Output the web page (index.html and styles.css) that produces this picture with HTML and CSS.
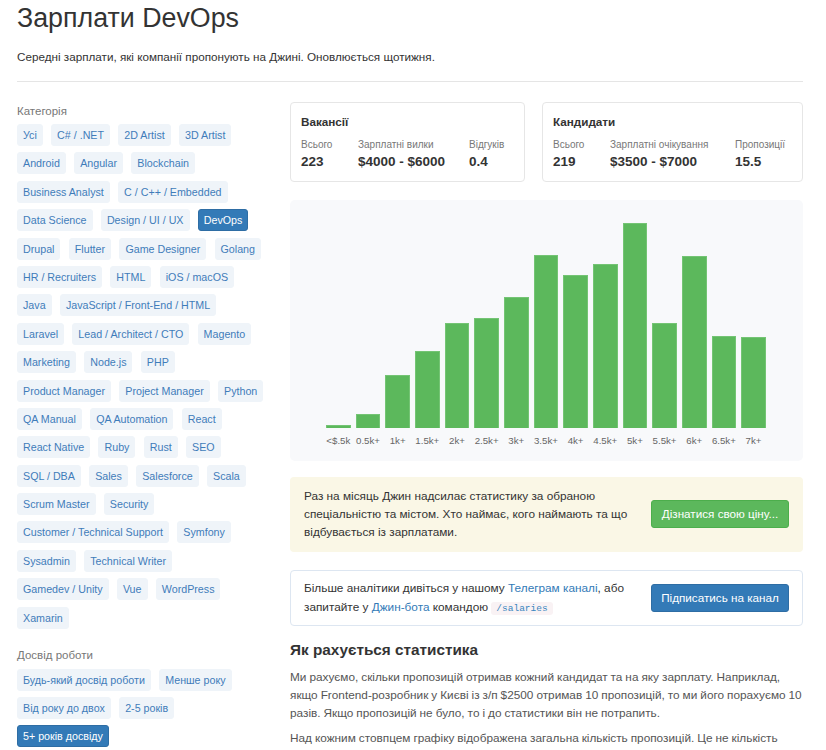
FILE: index.html
```html
<!DOCTYPE html>
<html lang="uk">
<head>
<meta charset="utf-8">
<title>Зарплати DevOps</title>
<link rel="stylesheet" href="styles.css">
</head>
<body>
<div class="page">
  <h1 class="title">Зарплати DevOps</h1>
  <p class="subtitle">Середні зарплати, які компанії пропонують на Джині. Оновлюється щотижня.</p>
  <hr class="divider">
  <div class="layout">
    <aside class="sidebar">
      <div class="filter-label">Категорія</div>
      <div class="tags">
        <a class="tag">Усі</a><a class="tag">C# / .NET</a><a class="tag">2D Artist</a><a class="tag">3D Artist</a>
        <a class="tag">Android</a><a class="tag">Angular</a><a class="tag">Blockchain</a>
        <a class="tag">Business Analyst</a><a class="tag">C / C++ / Embedded</a>
        <a class="tag">Data Science</a><a class="tag">Design / UI / UX</a><a class="tag active">DevOps</a>
        <a class="tag">Drupal</a><a class="tag">Flutter</a><a class="tag">Game Designer</a><a class="tag">Golang</a>
        <a class="tag">HR / Recruiters</a><a class="tag">HTML</a><a class="tag">iOS / macOS</a>
        <a class="tag">Java</a><a class="tag">JavaScript / Front-End / HTML</a>
        <a class="tag">Laravel</a><a class="tag">Lead / Architect / CTO</a><a class="tag">Magento</a>
        <a class="tag">Marketing</a><a class="tag">Node.js</a><a class="tag">PHP</a>
        <a class="tag">Product Manager</a><a class="tag">Project Manager</a><a class="tag">Python</a>
        <a class="tag">QA Manual</a><a class="tag">QA Automation</a><a class="tag">React</a>
        <a class="tag">React Native</a><a class="tag">Ruby</a><a class="tag">Rust</a><a class="tag">SEO</a>
        <a class="tag">SQL / DBA</a><a class="tag">Sales</a><a class="tag">Salesforce</a><a class="tag">Scala</a>
        <a class="tag">Scrum Master</a><a class="tag">Security</a>
        <a class="tag">Customer / Technical Support</a><a class="tag">Symfony</a>
        <a class="tag">Sysadmin</a><a class="tag">Technical Writer</a>
        <a class="tag">Gamedev / Unity</a><a class="tag">Vue</a><a class="tag">WordPress</a>
        <a class="tag">Xamarin</a>
      </div>
      <div class="filter-label filter-label-exp">Досвід роботи</div>
      <div class="tags">
        <a class="tag">Будь-який досвід роботи</a><a class="tag">Менше року</a>
        <a class="tag">Від року до двох</a><a class="tag">2-5 років</a>
        <a class="tag active">5+ років досвіду</a>
      </div>
    </aside>
    <main class="content">
      <div class="stat-cards">
        <div class="stat-card stat-card-jobs">
          <div class="stat-title">Вакансії</div>
          <div class="stat-row">
            <div class="stat stat-total"><div class="stat-label">Всього</div><div class="stat-value">223</div></div>
            <div class="stat stat-range"><div class="stat-label">Зарплатні вилки</div><div class="stat-value">$4000 - $6000</div></div>
            <div class="stat"><div class="stat-label">Відгуків</div><div class="stat-value">0.4</div></div>
          </div>
        </div>
        <div class="stat-card">
          <div class="stat-title">Кандидати</div>
          <div class="stat-row">
            <div class="stat stat-total"><div class="stat-label">Всього</div><div class="stat-value">219</div></div>
            <div class="stat stat-range-wide"><div class="stat-label">Зарплатні очікування</div><div class="stat-value">$3500 - $7000</div></div>
            <div class="stat"><div class="stat-label">Пропозиції</div><div class="stat-value">15.5</div></div>
          </div>
        </div>
      </div>

      <div class="chart">
        <div class="chart-plot">
          <div class="bar-col"><div class="bar" style="height:3px"></div></div>
          <div class="bar-col"><div class="bar" style="height:14px"></div></div>
          <div class="bar-col"><div class="bar" style="height:53px"></div></div>
          <div class="bar-col"><div class="bar" style="height:77px"></div></div>
          <div class="bar-col"><div class="bar" style="height:105px"></div></div>
          <div class="bar-col"><div class="bar" style="height:110px"></div></div>
          <div class="bar-col"><div class="bar" style="height:131px"></div></div>
          <div class="bar-col"><div class="bar" style="height:173px"></div></div>
          <div class="bar-col"><div class="bar" style="height:153px"></div></div>
          <div class="bar-col"><div class="bar" style="height:164px"></div></div>
          <div class="bar-col"><div class="bar" style="height:205px"></div></div>
          <div class="bar-col"><div class="bar" style="height:105px"></div></div>
          <div class="bar-col"><div class="bar" style="height:172px"></div></div>
          <div class="bar-col"><div class="bar" style="height:92px"></div></div>
          <div class="bar-col"><div class="bar" style="height:91px"></div></div>
        </div>
        <div class="chart-labels">
          <span>&lt;$.5k</span><span>0.5k+</span><span>1k+</span><span>1.5k+</span><span>2k+</span>
          <span>2.5k+</span><span>3k+</span><span>3.5k+</span><span>4k+</span><span>4.5k+</span>
          <span>5k+</span><span>5.5k+</span><span>6k+</span><span>6.5k+</span><span>7k+</span>
        </div>
      </div>

      <div class="notice notice-warning">
        <div class="notice-text">Раз на місяць Джин надсилає статистику за обраною спеціальністю та містом. Хто наймає, кого наймають та що відбувається із зарплатами.</div>
        <a class="btn btn-success">Дізнатися свою ціну...</a>
      </div>

      <div class="notice notice-info">
        <div class="notice-text">Більше аналітики дивіться у нашому <a class="link">Телеграм каналі</a>, або запитайте у <a class="link">Джин-бота</a> командою <code class="code">/salaries</code></div>
        <a class="btn btn-primary">Підписатись на канал</a>
      </div>

      <h3 class="section-title">Як рахується статистика</h3>
      <p class="text">Ми рахуємо, скільки пропозицій отримав кожний кандидат та на яку зарплату. Наприклад, якщо Frontend-розробник у Києві із з/п $2500 отримав 10 пропозицій, то ми його порахуємо 10 разів. Якщо пропозицій не було, то і до статистики він не потрапить.</p>
      <p class="text">Над кожним стовпцем графіку відображена загальна кількість пропозицій. Це не кількість кандидатів, а саме кількість пропозицій, які вони отримали.</p>
    </main>
  </div>
</div>
</body>
</html>
```

FILE: styles.css
```css
* { box-sizing: border-box; }

body {
  margin: 0;
  font-family: "Liberation Sans", Arial, sans-serif;
  font-size: 12px;
  color: #333;
  background: #fff;
}

.page {
  padding: 0 23px 0 17px;
}

.title {
  margin: 3px 0 0;
  font-size: 26.8px;
  line-height: 31px;
  font-weight: normal;
  color: #333;
}

.subtitle {
  margin: 14px 0 0;
  font-size: 11.7px;
  line-height: 17px;
  color: #333;
}

.divider {
  margin: 16px 0 0;
  border: 0;
  border-top: 1px solid #e5e5e5;
}

.layout {
  display: flex;
  align-items: flex-start;
  padding-top: 20px;
}

.sidebar {
  width: 273px;
  flex: none;
  padding-right: 23px;
}

.filter-label {
  font-size: 11.5px;
  line-height: 14px;
  color: #777;
  margin: 2px 0 6px;
}

.filter-label-exp {
  margin-top: 19px;
  margin-bottom: 7px;
}

.tags {
  display: flex;
  flex-wrap: wrap;
  gap: 6.4px 8.3px;
}

.tag {
  display: inline-block;
  padding: 3px 5px;
  font-size: 10.7px;
  line-height: 14px;
  color: #3f7cba;
  background: #eff4f9;
  border: 1px solid #eff4f9;
  border-radius: 3px;
  text-decoration: none;
}

.tag.active {
  color: #fff;
  background: #337ab7;
  border-color: #2e6da4;
}

.content {
  flex: 1;
  min-width: 0;
}

.stat-cards {
  display: flex;
  gap: 17px;
}

.stat-card {
  flex: 1;
  border: 1px solid #e6e6e6;
  border-radius: 4px;
  padding: 12px 10px 11px;
}

.stat-card-jobs {
  flex: 0 0 235px;
}

.stat-title {
  font-weight: bold;
  font-size: 11.7px;
  line-height: 14px;
  margin-bottom: 9px;
}

.stat-row {
  display: flex;
}

.stat-total { width: 57px; }
.stat-range { width: 111px; }
.stat-range-wide { width: 125px; }

.stat-label {
  font-size: 10px;
  line-height: 13px;
  color: #777;
}

.stat-value {
  margin-top: 2px;
  font-size: 13.5px;
  line-height: 17px;
  font-weight: bold;
  color: #333;
}

.chart {
  margin-top: 18px;
  height: 261px;
  background: #f8f9fb;
  border-radius: 5px;
  padding-left: 36px;
}

.chart-plot {
  height: 228px;
  display: flex;
  align-items: flex-end;
  gap: 5px;
}

.bar-col {
  width: 24.67px;
  flex: none;
  display: flex;
  align-items: flex-end;
}

.bar {
  width: 100%;
  background: #5cb85c;
  border: 1px solid #74c474;
  border-bottom: 0;
}

.chart-labels {
  display: flex;
  gap: 5px;
  margin-top: 6px;
}

.chart-labels span {
  width: 24.67px;
  flex: none;
  display: flex;
  justify-content: center;
  white-space: nowrap;
  font-size: 9.7px;
  line-height: 13px;
  color: #666;
}

.notice {
  display: flex;
  align-items: center;
  gap: 10px;
  border-radius: 4px;
}

.notice-warning {
  margin-top: 16px;
  background: #faf7e6;
  padding: 10px 14px 11px;
}

.notice-info {
  margin-top: 18px;
  border: 1px solid #dde6f1;
  padding: 8px 13px;
}

.notice-text {
  flex: 1;
  font-size: 11.8px;
  line-height: 18px;
  color: #333;
}

.notice-info .notice-text {
  line-height: 19px;
}

.link {
  color: #337ab7;
  text-decoration: none;
}

.code {
  font-family: "Liberation Mono", "DejaVu Sans Mono", monospace;
  font-size: 9.5px;
  line-height: 12px;
  color: #3a86c0;
  background: #f9f2f4;
  padding: 1px 5px;
  border-radius: 3px;
}

.btn {
  flex: none;
  display: inline-block;
  width: 138px;
  text-align: center;
  padding: 5px 0;
  font-size: 11.7px;
  line-height: 16px;
  color: #fff;
  border: 1px solid transparent;
  border-radius: 3px;
}

.btn-success {
  background: #5cb85c;
  border-color: #4cae4c;
}

.btn-primary {
  background: #337ab7;
  border-color: #2e6da4;
}

.section-title {
  margin: 14px 0 0;
  font-size: 15.3px;
  line-height: 20px;
  font-weight: bold;
  color: #333;
}

.text {
  margin: 8px 0 0;
  font-size: 11.8px;
  line-height: 18px;
  word-spacing: -0.3px;
  color: #555;
}

.text + .text {
  margin-top: 7px;
}
```
